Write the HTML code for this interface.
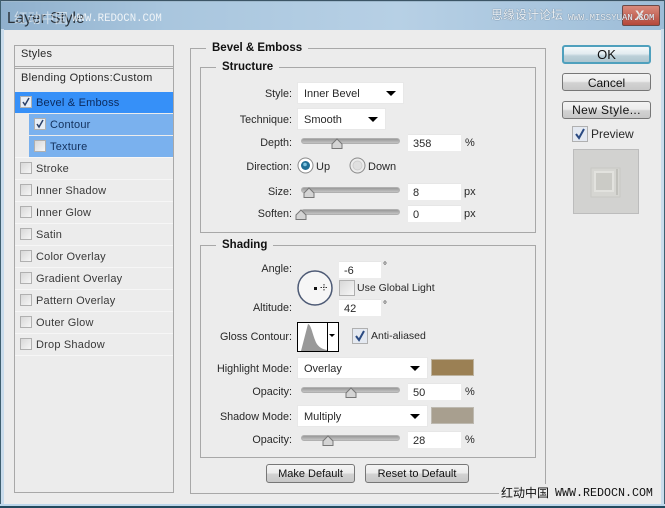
<!DOCTYPE html>
<html><head><meta charset="utf-8">
<style>
*{box-sizing:border-box}
html,body{margin:0;padding:0}
body{width:665px;height:508px;position:relative;overflow:hidden;background:#ececec;font-family:"Liberation Sans","Noto Sans CJK SC",sans-serif;font-size:11px;color:#282828}
.a,.t,.l,.i,.s,.b,.c,.tr{position:absolute}
.t{white-space:nowrap;line-height:14px;margin-top:1px}
.l{white-space:nowrap;line-height:14px;text-align:right;width:99px;left:193px;font-size:10.8px;margin-top:1px}
.i{background:#fff;height:17px;width:53px;left:408px;border-top:1px solid #e6e6e6;padding:2px 0 0 5px;line-height:14px}
.s{background:#fff;height:22px;left:297px;border:1px solid #e8e8e8;padding:4px 0 0 6px;line-height:14px}
.s:after{content:"";position:absolute;right:7px;top:8px;border-left:5px solid transparent;border-right:5px solid transparent;border-top:5px solid #000}
.tr{left:301px;width:99px;height:6px;background:linear-gradient(#999,#c4c4c4);border:1px solid #b0b0b0;border-radius:3px}
.b{background:linear-gradient(#f4f4f4 0,#ececec 45%,#d2d2d2 55%,#c8c8c8 100%);border:1px solid #777;border-radius:3px;text-align:center;color:#111}
.c{width:12px;height:12px;border:1px solid #b0b0b0;background:linear-gradient(135deg,#d8d8d8,#f6f6f6)}
.c svg{position:absolute;left:0;top:0}
.g{position:absolute;border:1px solid #a8a8a8}
.tit{position:absolute;background:#ececec;font-weight:bold;padding:0 6px;line-height:14px;color:#111;white-space:nowrap;font-size:11.500px;margin-top:1px}
.r{position:absolute;left:15px;width:158px;height:22px;line-height:24px;padding-left:21px;color:#3a3a3a;white-space:nowrap;letter-spacing:.2px}
</style></head><body>

<div class="a" style="left:0;top:0;width:665px;height:30px;background:linear-gradient(90deg,#8fb0cd 0,#a9c6de 25%,#b7d0e5 60%,#9dbdd8 100%)"></div>
<div class="a" style="left:0;top:0;width:665px;height:1px;background:#3c5566"></div>
<div class="a" style="left:0;top:1px;width:665px;height:1px;background:#9fb9cd"></div>
<div class="a" style="left:0;top:0;width:1px;height:508px;background:#3f5f70"></div>
<div class="a" style="left:1px;top:29px;width:3px;height:476px;background:#c9dcec"></div>
<div class="a" style="left:661px;top:29px;width:3px;height:476px;background:#c9dcec"></div>
<div class="a" style="left:664px;top:0;width:1px;height:508px;background:#3f5f70"></div>
<div class="a" style="left:0;top:504px;width:665px;height:2px;background:#bcd6ea"></div>
<div class="a" style="left:0;top:506px;width:665px;height:2px;background:#234a5e"></div>

<div class="t" style="left:7px;top:9px;font-size:15.500px;line-height:18px;color:#2a3138">Layer Style</div>
<div class="t" style="left:14px;top:11px;font-size:13.500px;color:#e8eef3;opacity:.7">红动中国</div>
<div class="t" style="left:72px;top:11px;font-size:10.700px;color:#eef3f7;font-family:'Liberation Mono',monospace">WWW.REDOCN.COM</div>
<div class="a" style="left:622px;top:5px;width:38px;height:21px;background:linear-gradient(#d98a7c,#b5483a);border:1px solid #6a4a48;border-radius:2px"></div>
<div class="t" style="left:635px;top:7px;font-size:14px;font-weight:bold;color:#e8e8e8">X</div>
<div class="t" style="left:491px;top:7px;font-size:12px;color:#eef3f7;text-shadow:0 0 1px #44566a">思缘设计论坛</div>
<div class="t" style="left:568px;top:10px;font-size:9px;color:#eef3f7;text-shadow:0 0 1px #44566a;font-family:'Liberation Mono',monospace">WWW.MISSYUAN.COM</div>

<!-- left panel -->
<div class="g" style="left:14px;top:45px;width:160px;height:448px"></div>
<div class="a" style="left:15px;top:66px;width:158px;height:1px;background:#a9a9a9"></div>
<div class="a" style="left:15px;top:68px;width:158px;height:1px;background:#a9a9a9"></div>
<div class="t" style="left:21px;top:46px;letter-spacing:.2px">Styles</div>
<div class="t" style="left:21px;top:70px;letter-spacing:.3px">Blending Options:Custom</div>
<div class="a" style="left:15px;top:92px;width:158px;height:21px;background:#3690f8"></div>
<div class="a" style="left:29px;top:114px;width:144px;height:21px;background:#7ab1ee"></div>
<div class="a" style="left:29px;top:136px;width:144px;height:21px;background:#7ab1ee"></div>
<div class="a" style="left:15px;top:157px;width:158px;height:199px;background:repeating-linear-gradient(#f6f6f6 0,#f6f6f6 1px,transparent 1px,transparent 22px)"></div>

<div class="r" style="top:91px;color:#0c2a5c">Bevel &amp; Emboss</div>
<div class="r" style="top:113px;left:29px;width:144px;color:#12305c">Contour</div>
<div class="r" style="top:135px;left:29px;width:144px;color:#12305c">Texture</div>
<div class="r" style="top:157px">Stroke</div>
<div class="r" style="top:179px">Inner Shadow</div>
<div class="r" style="top:201px">Inner Glow</div>
<div class="r" style="top:223px">Satin</div>
<div class="r" style="top:245px">Color Overlay</div>
<div class="r" style="top:267px">Gradient Overlay</div>
<div class="r" style="top:289px">Pattern Overlay</div>
<div class="r" style="top:311px">Outer Glow</div>
<div class="r" style="top:333px">Drop Shadow</div>

<div class="c" style="left:20px;top:96px;background:#e8eef6"><svg width="10" height="10"><path d="M2 5l2 3 4-7" fill="none" stroke="#2a3f66" stroke-width="1.500"/></svg></div>
<div class="c" style="left:34px;top:118px;background:#e8eef6"><svg width="10" height="10"><path d="M2 5l2 3 4-7" fill="none" stroke="#2a3f66" stroke-width="1.500"/></svg></div>
<div class="c" style="left:34px;top:140px"></div>
<div class="c" style="left:20px;top:162px"></div>
<div class="c" style="left:20px;top:184px"></div>
<div class="c" style="left:20px;top:206px"></div>
<div class="c" style="left:20px;top:228px"></div>
<div class="c" style="left:20px;top:250px"></div>
<div class="c" style="left:20px;top:272px"></div>
<div class="c" style="left:20px;top:294px"></div>
<div class="c" style="left:20px;top:316px"></div>
<div class="c" style="left:20px;top:338px"></div>

<!-- groups -->
<div class="g" style="left:190px;top:48px;width:356px;height:446px"></div>
<div class="tit" style="left:206px;top:40px">Bevel &amp; Emboss</div>
<div class="g" style="left:200px;top:67px;width:336px;height:166px"></div>
<div class="tit" style="left:216px;top:59px">Structure</div>
<div class="g" style="left:200px;top:245px;width:336px;height:213px"></div>
<div class="tit" style="left:216px;top:237px">Shading</div>

<!-- structure -->
<div class="l" style="top:86px">Style:</div>
<div class="s" style="top:82px;width:107px">Inner Bevel</div>
<div class="l" style="top:112px">Technique:</div>
<div class="s" style="top:108px;width:89px">Smooth</div>
<div class="l" style="top:135px">Depth:</div>
<div class="tr" style="top:138px"></div>
<svg class="a" style="left:330px;top:138px" width="14" height="12"><path d="M7 1L12 6V10.500H2V6Z" fill="#d4d4d4" stroke="#777"/></svg>
<div class="i" style="top:134px">358</div>
<div class="t" style="left:465px;top:135px">%</div>

<div class="l" style="top:159px">Direction:</div>
<svg class="a" style="left:297px;top:157px" width="18" height="18"><circle cx="8.500" cy="8.500" r="7.500" fill="#fff" stroke="#8a8a8a"/><circle cx="8.500" cy="8.500" r="4.500" fill="#1f6f96"/><circle cx="8" cy="7.500" r="1.800" fill="#7fc4e0"/></svg>
<div class="t" style="left:316px;top:159px">Up</div>
<svg class="a" style="left:349px;top:157px" width="18" height="18"><circle cx="8.500" cy="8.500" r="7.500" fill="#ececec" stroke="#8a8a8a"/><circle cx="8.500" cy="8.500" r="4.500" fill="#e0e0e0" stroke="#cfcfcf"/></svg>
<div class="t" style="left:368px;top:159px">Down</div>

<div class="l" style="top:184px">Size:</div>
<div class="tr" style="top:187px"></div>
<svg class="a" style="left:302px;top:187px" width="14" height="12"><path d="M7 1L12 6V10.500H2V6Z" fill="#d4d4d4" stroke="#777"/></svg>
<div class="i" style="top:183px">8</div>
<div class="t" style="left:464px;top:184px">px</div>

<div class="l" style="top:206px">Soften:</div>
<div class="tr" style="top:209px"></div>
<svg class="a" style="left:294px;top:209px" width="14" height="12"><path d="M7 1L12 6V10.500H2V6Z" fill="#d4d4d4" stroke="#777"/></svg>
<div class="i" style="top:205px">0</div>
<div class="t" style="left:464px;top:206px">px</div>

<!-- shading -->
<div class="l" style="top:261px">Angle:</div>
<div class="i" style="top:261px;left:339px;width:42px">-6</div>
<div class="t" style="left:383px;top:259px;font-size:10px">°</div>
<svg class="a" style="left:296px;top:269px" width="38" height="38"><circle cx="19" cy="19" r="17" fill="#f6f6f6" stroke="#4d5a75" stroke-width="1.500"/><rect x="18" y="18" width="3" height="3" fill="#111"/><path d="M28 15v7M24.500 18.500h7" stroke="#333" stroke-width="1" stroke-dasharray="1.500 1"/></svg>
<div class="c" style="left:339px;top:280px;width:16px;height:16px"></div>
<div class="t" style="left:357px;top:280px;font-size:10.500px">Use Global Light</div>
<div class="l" style="top:300px">Altitude:</div>
<div class="i" style="top:299px;left:339px;width:42px">42</div>
<div class="t" style="left:383px;top:298px;font-size:10px">°</div>

<div class="l" style="top:329px">Gloss Contour:</div>
<svg class="a" style="left:297px;top:322px" width="42" height="30"><rect x=".5" y=".5" width="41" height="29" fill="#fff" stroke="#000"/><path d="M.5 .5V29.500M30.500 .5V29.500" stroke="#000"/><path d="M4 29L11 2C14 3 15 10 18 18C20 24 24 27 30 28V29Z" fill="#999"/><path d="M32 12h6l-3 3Z" fill="#000"/></svg>
<div class="c" style="left:352px;top:328px;width:16px;height:16px;background:#e4e9f1"><svg width="14" height="14"><path d="M3 7l3 4 5-9" fill="none" stroke="#2a4a82" stroke-width="2"/></svg></div>
<div class="t" style="left:371px;top:328px;font-size:10.500px">Anti-aliased</div>

<div class="l" style="top:361px">Highlight Mode:</div>
<div class="s" style="top:357px;width:131px">Overlay</div>
<div class="a" style="left:431px;top:359px;width:43px;height:17px;background:#9b8054;border:1px solid #bdb39f"></div>
<div class="l" style="top:384px">Opacity:</div>
<div class="tr" style="top:387px"></div>
<svg class="a" style="left:344px;top:387px" width="14" height="12"><path d="M7 1L12 6V10.500H2V6Z" fill="#d4d4d4" stroke="#777"/></svg>
<div class="i" style="top:383px">50</div>
<div class="t" style="left:465px;top:384px">%</div>

<div class="l" style="top:409px">Shadow Mode:</div>
<div class="s" style="top:405px;width:131px">Multiply</div>
<div class="a" style="left:431px;top:407px;width:43px;height:17px;background:#a89f8f;border:1px solid #bdb9b0"></div>
<div class="l" style="top:432px">Opacity:</div>
<div class="tr" style="top:435px"></div>
<svg class="a" style="left:321px;top:435px" width="14" height="12"><path d="M7 1L12 6V10.500H2V6Z" fill="#d4d4d4" stroke="#777"/></svg>
<div class="i" style="top:431px">28</div>
<div class="t" style="left:465px;top:432px">%</div>

<div class="b" style="left:266px;top:464px;width:89px;height:19px;line-height:19px">Make Default</div>
<div class="b" style="left:365px;top:464px;width:104px;height:19px;line-height:19px">Reset to Default</div>

<!-- right -->
<div class="b" style="left:562px;top:45px;width:89px;height:19px;line-height:16px;border:2px solid #4fa0bd;background:linear-gradient(#f4f8fa 0,#e2ecf0 45%,#bcd0d8 60%,#aec6d0 100%);font-size:13px">OK</div>
<div class="b" style="left:562px;top:73px;width:89px;height:18px;line-height:18px;font-size:12px">Cancel</div>
<div class="b" style="left:562px;top:101px;width:89px;height:18px;line-height:17px;letter-spacing:.4px;font-size:12px">New Style...</div>
<div class="c" style="left:572px;top:126px;width:16px;height:16px;background:#e4e9f1"><svg width="14" height="14"><path d="M3 7l3 4 5-9" fill="none" stroke="#2a4a82" stroke-width="2"/></svg></div>
<div class="t" style="left:591px;top:126px;font-size:12px">Preview</div>
<div class="a" style="left:573px;top:149px;width:66px;height:65px;background:#d2d2d0;border:1px solid #bcbcbc"></div>
<svg class="a" style="left:589px;top:166px" width="34" height="33"><rect x="2" y="2" width="29" height="29" fill="#d6d6d2" stroke="#c8c8c4"/><rect x="6" y="6" width="18" height="19" fill="#cbcbc6" stroke="#e2e2de" stroke-width="2"/><path d="M28 3v26" stroke="#c0c0bb" stroke-width="2"/></svg>

<div class="a" style="left:499px;top:484px;width:156px;height:15px;background:#ececec"></div>
<div class="t" style="left:501px;top:485px;font-size:12px;color:#111">红动中国</div>
<div class="t" style="left:555px;top:485px;font-size:11.670px;color:#111;font-family:'Liberation Mono',monospace">WWW.REDOCN.COM</div>
</body></html>
